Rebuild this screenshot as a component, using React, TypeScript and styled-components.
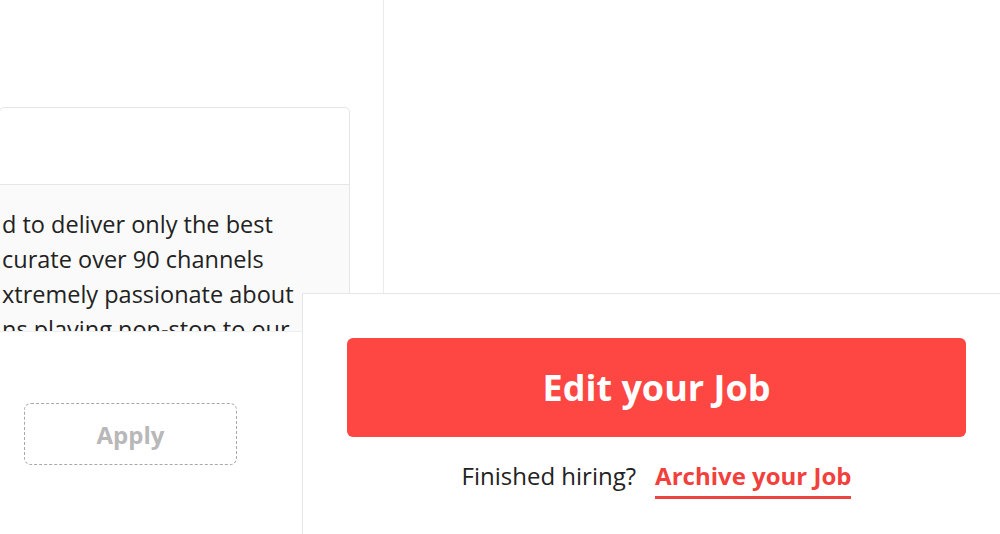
import React from "react";
import styled, { createGlobalStyle } from "styled-components";

const Global = createGlobalStyle`
  html, body { margin: 0; padding: 0; background: #fff; }
  body { font-family: "Open Sans", Lato, sans-serif; color: #222; }
  * { box-sizing: border-box; }
`;

const Page = styled.div`
  position: relative;
  width: 1000px;
  height: 534px;
  overflow: hidden;
  display: flex;
  background: #fff;
`;

const LeftColumn = styled.div`
  width: 384px;
  height: 100%;
  border-right: 1px solid #ebebeb;
  padding-top: 107px;
  overflow: hidden;
`;

const Card = styled.div`
  width: 351px;
  margin-left: -1px;
  border: 1px solid #e6e6e6;
  border-radius: 5px;
  background: #fff;
`;

const CardHeader = styled.div`
  height: 77px;
  border-bottom: 1px solid #e6e6e6;
`;

const CardBody = styled.div`
  height: 147px;
  overflow: hidden;
  background: #fafafa;
  padding: 22px 0 0 2px;
  border-bottom: 1px solid #efefef;
  font-size: 23.5px;
  line-height: 35px;
  color: #222;
`;

const Line = styled.div`
  white-space: nowrap;
`;

const CardFooter = styled.div`
  padding: 71px 0 80px 24px;
  background: #fff;
`;

const ApplyButton = styled.button`
  width: 213px;
  height: 62px;
  border: 1.5px dashed #a8a8a8;
  border-radius: 7px;
  background: #fff;
  color: #b8b8b8;
  font-family: "Open Sans", Lato, sans-serif;
  font-weight: 700;
  font-size: 24px;
  padding: 0;
`;

const ActionPanel = styled.div`
  position: absolute;
  left: 302px;
  top: 293px;
  right: 0;
  bottom: 0;
  background: #fff;
  border-top: 1px solid #e6e6e6;
  border-left: 1px solid #e6e6e6;
  padding: 44px 34px 0 44px;
  display: flex;
  flex-direction: column;
  align-items: stretch;
`;

const EditButton = styled.button`
  height: 99px;
  border: none;
  border-radius: 6px;
  background: #fe4643;
  color: #fff;
  font-family: "Open Sans", Lato, sans-serif;
  font-weight: 700;
  font-size: 36px;
  padding: 0;
`;

const HireRow = styled.div`
  margin-top: 22px;
  display: flex;
  justify-content: center;
  align-items: baseline;
  gap: 19px;
  font-size: 24px;
  line-height: 34px;
  color: #222;
`;

const ArchiveLink = styled.a`
  color: #f2403d;
  font-weight: 700;
  text-decoration: none;
  border-bottom: 3px solid #ee4440;
  padding-bottom: 3px;
`;

export default function App() {
  return (
    <>
      <Global />
      <Page>
        <LeftColumn>
          <Card>
            <CardHeader />
            <CardBody>
              <Line>d to deliver only the best</Line>
              <Line>curate over 90 channels</Line>
              <Line>xtremely passionate about</Line>
              <Line>ns playing non-stop to our</Line>
            </CardBody>
            <CardFooter>
              <ApplyButton>Apply</ApplyButton>
            </CardFooter>
          </Card>
        </LeftColumn>
        <ActionPanel>
          <EditButton>Edit your Job</EditButton>
          <HireRow>
            <span>Finished hiring?</span>
            <ArchiveLink href="#">Archive your Job</ArchiveLink>
          </HireRow>
        </ActionPanel>
      </Page>
    </>
  );
}
